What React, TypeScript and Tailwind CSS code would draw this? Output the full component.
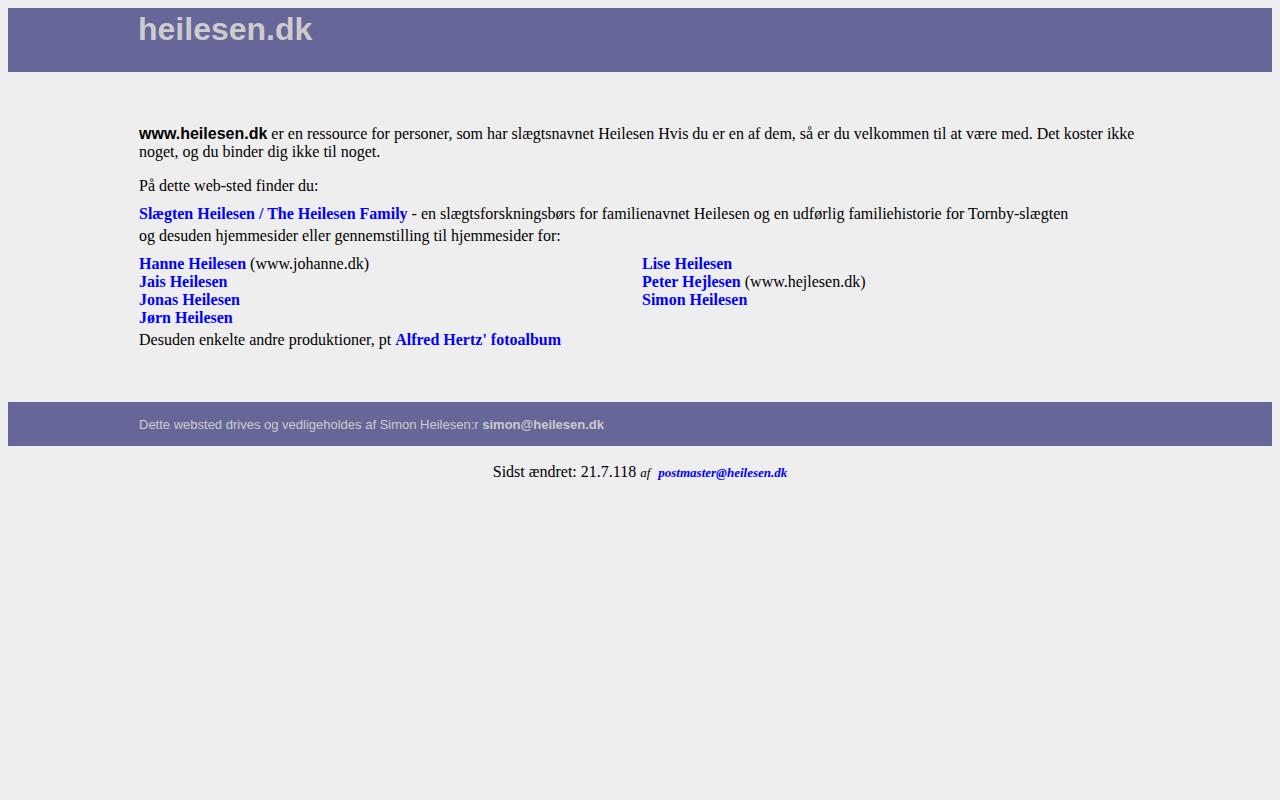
const serif = { fontFamily: '"Liberation Serif", "Times New Roman", serif' };

export default function App() {
  return (
    <div className="min-h-[800px] bg-[#eeeeee] p-2 text-black" style={serif}>
      {/* Header */}
      <div className="h-16 bg-[#666699] px-[130px]">
        <div className="pt-[3px] font-['Liberation_Sans',Arial,sans-serif] text-[32px] font-bold leading-[37px] text-[#cccccc]">
          heilesen.dk
        </div>
      </div>

      {/* Content */}
      <div className="pl-[131px] pr-[130px] pt-[53px] text-[16px] leading-[18px]">
        <p>
          <b className="font-['Liberation_Sans',Arial,sans-serif]">www.heilesen.dk</b> er en ressource for
          personer, som har slægtsnavnet Heilesen Hvis du er en af dem, så er du velkommen til at være med. Det
          koster ikke noget, og du binder dig ikke til noget.
        </p>
        <p className="mt-4">På dette web-sted finder du:</p>
        <p className="mt-[10px]">
          <a className="font-bold text-[#0000ff]">Slægten Heilesen / The Heilesen Family</a> - en
          slægtsforskningsbørs for familienavnet Heilesen og en udførlig familiehistorie for Tornby-slægten
        </p>
        <p className="mt-1">og desuden hjemmesider eller gennemstilling til hjemmesider for:</p>

        <div className="mt-[10px] flex">
          <div className="w-[503px]">
            <div>
              <a className="font-bold text-[#0000ff]">Hanne Heilesen</a> (www.johanne.dk)
            </div>
            <div>
              <a className="font-bold text-[#0000ff]">Jais Heilesen</a>
            </div>
            <div>
              <a className="font-bold text-[#0000ff]">Jonas Heilesen</a>
            </div>
            <div>
              <a className="font-bold text-[#0000ff]">Jørn Heilesen</a>
            </div>
          </div>
          <div className="flex-1">
            <div>
              <a className="font-bold text-[#0000ff]">Lise Heilesen</a>
            </div>
            <div>
              <a className="font-bold text-[#0000ff]">Peter Hejlesen</a> (www.hejlesen.dk)
            </div>
            <div>
              <a className="font-bold text-[#0000ff]">Simon Heilesen</a>
            </div>
          </div>
        </div>

        <p className="mt-1">
          Desuden enkelte andre produktioner, pt{' '}
          <a className="font-bold text-[#0000ff]">Alfred Hertz' fotoalbum</a>
        </p>
      </div>

      {/* Footer bar */}
      <div className="mt-[53px] flex h-11 items-center bg-[#666699] pl-[131px] pr-[130px] pt-[2px] font-['Liberation_Sans',Arial,sans-serif] text-[13px] text-[#cccccc]">
        <span>
          Dette websted drives og vedligeholdes af Simon Heilesen:r <b>simon@heilesen.dk</b>
        </span>
      </div>

      <div className="mt-[17px] text-center text-[16px] leading-[18px]">
        Sidst ændret: 21.7.118 <i className="text-[13px]">af</i>{'\u00a0 '}
        <a className="text-[13px] font-bold italic text-[#0000ff]">postmaster@heilesen.dk</a>
      </div>
    </div>
  );
}
